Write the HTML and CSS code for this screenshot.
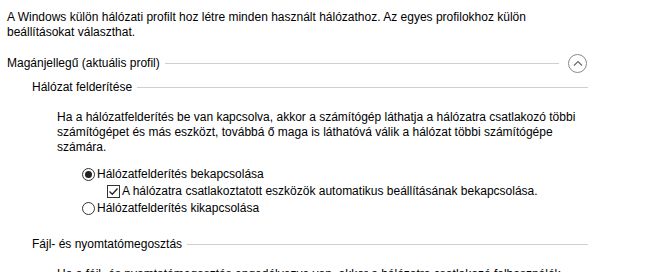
FILE: index.html
```html
<!DOCTYPE html>
<html lang="hu">
  <head>
    <meta charset="UTF-8" />
    <title>Speciális megosztási beállítások</title>
    <link rel="stylesheet" href="styles.css">
  </head>
  <body>
    <div class="page">
      <h1 class="title">Megosztási beállítások módosítása különböző hálózati profilokhoz</h1>
      <p class="intro">
        A Windows külön hálózati profilt hoz létre minden használt hálózathoz. Az egyes profilokhoz külön<br>
        beállításokat választhat.
      </p>

      <div class="profile-head">
        <span>Magánjellegű (aktuális profil)</span>
        <span class="rule"></span>
        <button class="collapse" title="Összecsukás">
          <svg width="10" height="6" viewBox="0 0 10 6"><path d="M1 5.5 L5 1.5 L9 5.5" fill="none" stroke="#6b6b6b" stroke-width="1.2"/></svg>
        </button>
      </div>

      <div class="group-head">
        <span>Hálózat felderítése</span>
        <span class="rule"></span>
      </div>
      <p class="desc">
        Ha a hálózatfelderítés be van kapcsolva, akkor a számítógép láthatja a hálózatra csatlakozó többi<br>
        számítógépet és más eszközt, továbbá ő maga is láthatóvá válik a hálózat többi számítógépe<br>
        számára.
      </p>
      <div class="options">
        <label class="option">
          <span class="radio is-checked"></span>
          Hálózatfelderítés bekapcsolása
        </label>
        <label class="option sub">
          <span class="check">
            <svg width="11" height="11" viewBox="0 0 11 11"><path d="M1.5 5.5 L4.3 8.3 L9.5 2.5" fill="none" stroke="#222" stroke-width="1.3"/></svg>
          </span>
          A hálózatra csatlakoztatott eszközök automatikus beállításának bekapcsolása.
        </label>
        <label class="option">
          <span class="radio"></span>
          Hálózatfelderítés kikapcsolása
        </label>
      </div>

      <div class="group-head second">
        <span>Fájl- és nyomtatómegosztás</span>
        <span class="rule"></span>
      </div>
      <p class="desc">
        Ha a fájl- és nyomtatómegosztás engedélyezve van, akkor a hálózatra csatlakozó felhasználók
      </p>
    </div>
  </body>
</html>
```

FILE: styles.css
```css
body {
  margin: 0;
  background: #fff;
  color: #000;
  font-family: "Liberation Sans", Arial, sans-serif;
  font-size: 12px;
  line-height: 15px;
  overflow: hidden;
}

.page {
  width: 581px;
  padding-left: 7px;
}

.title {
  margin: -20px 0 0 0;
  font-size: 15px;
  line-height: 20px;
  font-weight: normal;
  color: #1e3287;
  white-space: nowrap;
}

.intro {
  margin: 10px 0 0 0;
}

.profile-head,
.group-head {
  display: flex;
  align-items: center;
  gap: 5px;
}

.profile-head {
  margin-top: 13px;
  height: 20px;
}

.rule {
  flex: 1;
  border-top: 1px solid #cfcfcf;
}

.collapse {
  width: 19px;
  height: 19px;
  padding: 0;
  border: 1px solid #8a8a8a;
  border-radius: 50%;
  background: #fff;
  display: flex;
  align-items: center;
  justify-content: center;
  margin-left: 4px;
  margin-right: 1px;
}

.group-head {
  padding-left: 25px;
  margin-top: 6px;
  height: 16px;
}

.group-head.second {
  margin-top: 19px;
}

.desc {
  margin: 15px 0 0 50px;
}

.options {
  margin-top: 11px;
  padding-left: 75px;
}

.option {
  display: flex;
  align-items: center;
  gap: 2px;
  height: 17px;
}

.option.sub {
  padding-left: 25px;
}

.radio {
  width: 11px;
  height: 11px;
  border: 1px solid #333;
  border-radius: 50%;
  position: relative;
}

.radio.is-checked::after {
  content: "";
  position: absolute;
  left: 2px;
  top: 2px;
  width: 7px;
  height: 7px;
  border-radius: 50%;
  background: #222;
}

.check {
  width: 11px;
  height: 11px;
  border: 1px solid #333;
  display: flex;
  align-items: center;
  justify-content: center;
}
```
